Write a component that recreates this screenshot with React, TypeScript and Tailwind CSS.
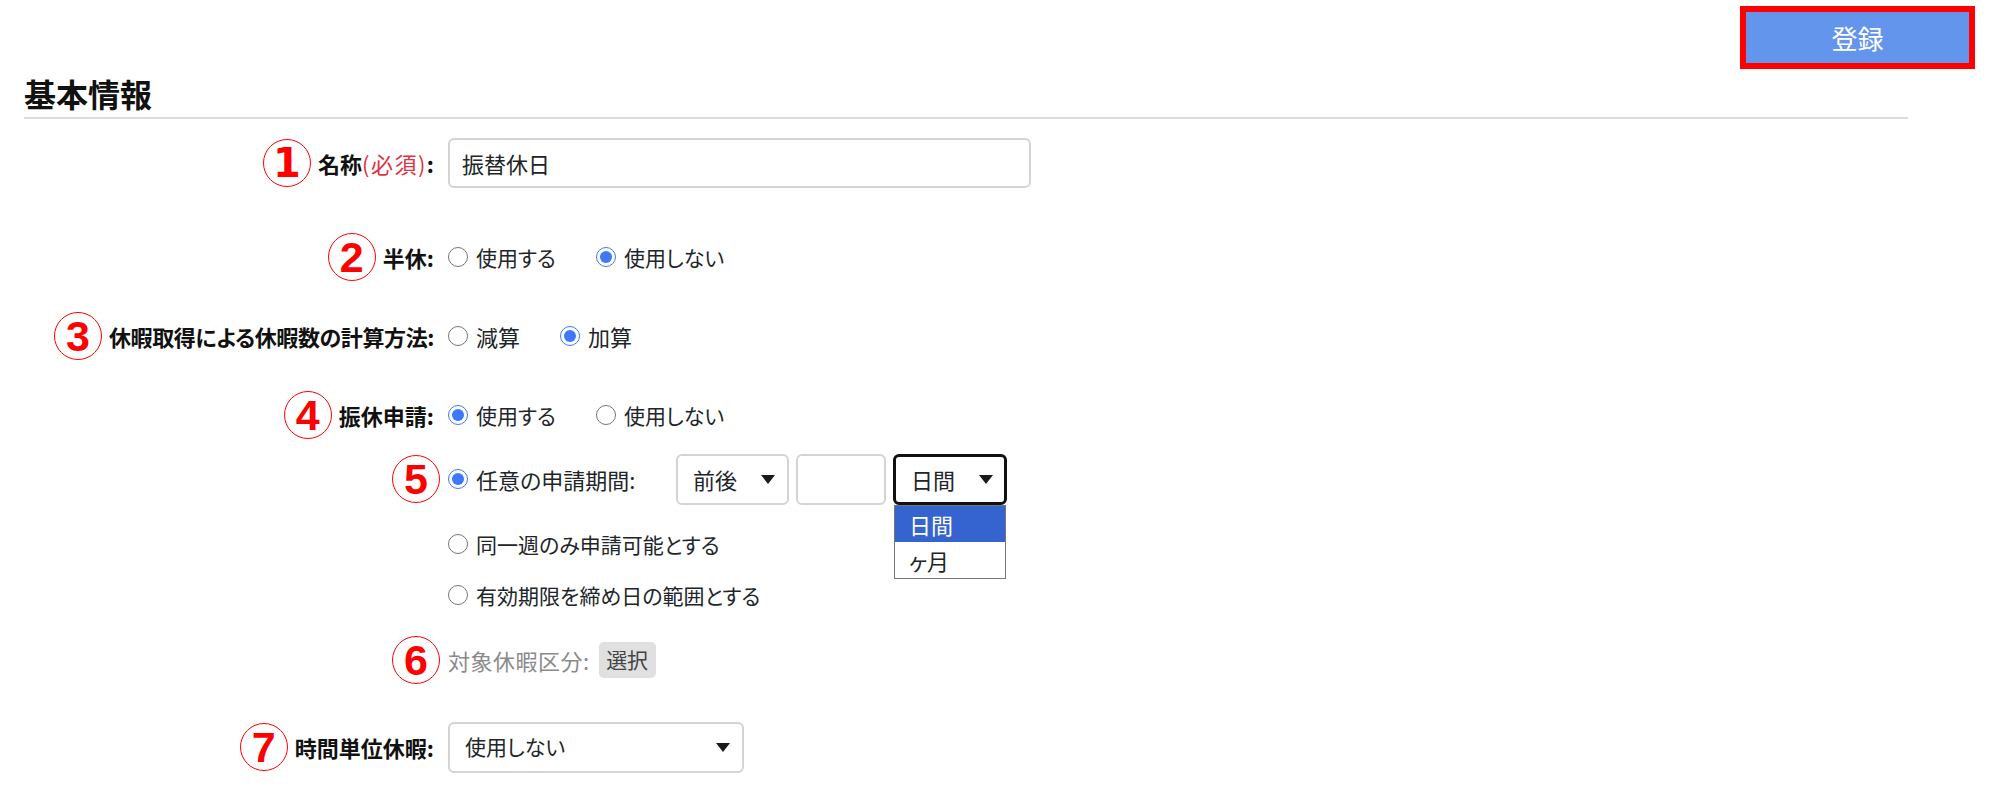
const jp = '[font-family:"Noto_Sans_CJK_JP","Noto_Sans_CJK_SC",sans-serif] [font-feature-settings:"palt"]';

function Caret() {
  return (
    <svg width="14" height="9" viewBox="0 0 14 9" className="shrink-0">
      <path d="M0 0h14L7 9z" fill="#1a1a1a" />
    </svg>
  );
}

function Circled({ n }: { n: number }) {
  return (
    <div
      className={`flex h-[48px] w-[48px] shrink-0 items-center justify-center rounded-full border-[1.5px] border-[#ff0000] leading-none font-bold text-[#ff0000] ${
        n === 1 ? 'text-[40px] [font-family:"DejaVu_Sans",sans-serif]' : 'text-[43px] [font-family:"Liberation_Sans",sans-serif]'
      }`}
    >
      {n}
    </div>
  );
}

function Radio({
  label,
  checked,
  kana,
  className = '',
}: {
  label: string;
  checked?: boolean;
  kana?: boolean; // kana runs narrower than kanji in the reference
  className?: string;
}) {
  return (
    <label
      className={`flex items-center gap-[8px] leading-none text-[#212529] ${kana ? 'text-[21px]' : 'text-[22px]'} ${className}`}
    >
      <input
        type="radio"
        readOnly
        checked={!!checked}
        className="m-0 h-[20px] w-[20px] shrink-0 accent-[#3d78ff]"
      />
      <span className="whitespace-nowrap">{label}</span>
    </label>
  );
}

function Row({
  n,
  label,
  required,
  tight,
  className = '',
  children,
}: {
  n?: number;
  label?: string;
  required?: boolean;
  tight?: boolean;
  className?: string;
  children: React.ReactNode;
}) {
  return (
    <div className={`flex h-[50px] items-center ${className}`}>
      {/* rows with no label keep the number closer to the field */}
      <div className={`flex shrink-0 items-center justify-end gap-[7px] ${label ? 'w-[434px]' : 'w-[440px]'}`}>
        {n && <Circled n={n} />}
        {label && (
          <span
            className={`text-[22px] leading-none font-bold whitespace-nowrap text-[#111] ${tight ? 'tracking-[-0.4px]' : ''}`}
          >
            {label}
            {required && <span className="font-normal tracking-[1.5px] text-[#dc3545]">(必須)</span>}:
          </span>
        )}
      </div>
      <div className={`flex items-center ${label ? 'ml-[14px]' : 'ml-[8px]'}`}>{children}</div>
    </div>
  );
}

function Select({ value, focused, kana, className = '' }: { value: string; focused?: boolean; kana?: boolean; className?: string }) {
  return (
    <div
      className={`flex h-[51px] items-center justify-between rounded-[6px] bg-white pl-[15px] text-[#212529] ${
        kana ? 'text-[21px]' : 'text-[22px]'
      } ${focused ? 'border-[3px] border-[#111] pr-[11px]' : 'border-2 border-[#d4d4d4] pr-[12px]'} ${className}`}
    >
      <span>{value}</span>
      <Caret />
    </div>
  );
}

export default function App() {
  return (
    <div className={`h-[809px] w-[2000px] overflow-hidden bg-white ${jp}`}>
      <div className="flex justify-end pt-[6px] pr-[25px]">
        <button className="h-[63px] w-[235px] border-[6px] border-[#ff0000] bg-[#6495ed] text-[26px] text-white">
          登録
        </button>
      </div>

      <div className="ml-[24px] flex h-[50px] w-[1884px] items-center border-b-2 border-[#dddddd]">
        <h2 className="text-[32px] leading-none font-bold text-[#111]">基本情報</h2>
      </div>

      <Row n={1} label="名称" required className="mt-[19px]">
        <input
          defaultValue="振替休日"
          className="h-[50px] w-[583px] rounded-[6px] border-2 border-[#d4d4d4] bg-white px-[12px] text-[22px] text-[#212529]"
        />
      </Row>

      <Row n={2} label="半休" className="mt-[44px]">
        <Radio label="使用する" kana className="w-[148px]" />
        <Radio label="使用しない" kana checked />
      </Row>

      <Row n={3} label="休暇取得による休暇数の計算方法" tight className="mt-[29px]">
        <Radio label="減算" className="w-[112px]" />
        <Radio label="加算" checked />
      </Row>

      <Row n={4} label="振休申請" className="mt-[29px]">
        <Radio label="使用する" kana checked className="w-[148px]" />
        <Radio label="使用しない" kana />
      </Row>

      <Row n={5} className="mt-[14px]">
        <Radio label="任意の申請期間:" checked className="w-[228px]" />
        <Select value="前後" className="w-[113px]" />
        <div className="ml-[7px] h-[51px] w-[90px] rounded-[6px] border-2 border-[#d4d4d4] bg-white" />
        <div className="relative ml-[7px]">
          <Select value="日間" focused className="w-[114px]" />
          <div className="absolute top-[51px] left-[1px] w-[112px] border border-[#767676] bg-white text-[22px] leading-[36px] text-[#212529]">
            <div className="bg-[#3563cf] pl-[14px] text-white">日間</div>
            <div className="pl-[14px]">ヶ月</div>
          </div>
        </div>
      </Row>

      <div className="mt-[30px] ml-[448px] flex flex-col gap-[31px]">
        <Radio label="同一週のみ申請可能とする" kana className="h-[20px]" />
        <Radio label="有効期限を締め日の範囲とする" kana className="h-[20px]" />
      </div>

      <Row n={6} className="mt-[30px]">
        <span className="text-[22px] leading-none tracking-[0.5px] whitespace-nowrap text-[#8a8a8a]">対象休暇区分:</span>
        <button className="ml-[9px] h-[36px] w-[57px] rounded-[5px] bg-[#e0e0e0] text-[21px] text-[#444]">選択</button>
      </Row>

      <Row n={7} label="時間単位休暇" className="mt-[37px]">
        <Select value="使用しない" kana className="w-[296px]" />
      </Row>
    </div>
  );
}
